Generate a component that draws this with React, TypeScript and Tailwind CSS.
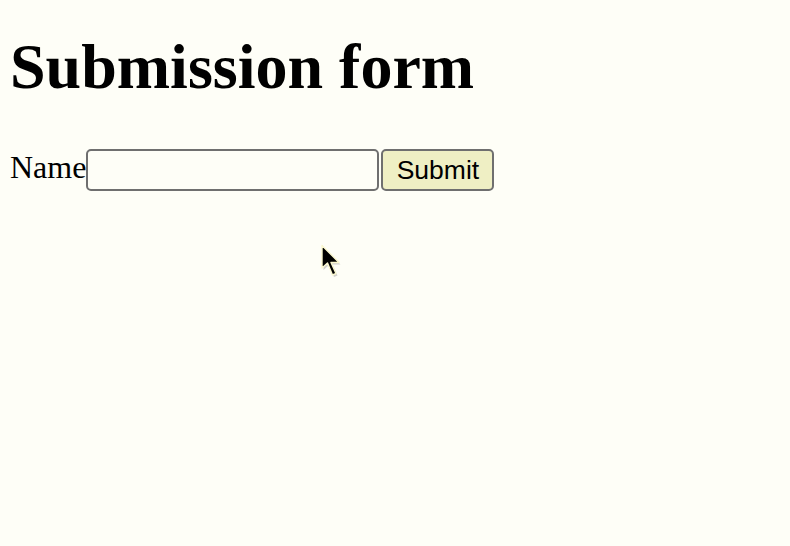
function Cursor() {
  return (
    <svg
      className="pointer-events-none absolute left-[318px] top-[242px]"
      width="28"
      height="40"
      viewBox="0 0 28 40"
    >
      <path
        d="M5.5 6 L5.5 28 L11 23 L16 35 L19.5 33.5 L14.5 22.5 L22.5 22.5 Z"
        fill="#9a9a9a"
        opacity="0.45"
      />
      <path
        d="M4 3.5 L4 26 L9.5 21 L14.5 33 L18 31.5 L13 20.5 L21 20.5 Z"
        fill="#000"
        stroke="#fbf8d0"
        strokeWidth="1.4"
        strokeLinejoin="round"
      />
    </svg>
  );
}

export default function App() {
  return (
    <div className="relative min-h-screen w-full bg-[#fefef7] font-['Liberation_Serif',serif] text-black">
      <div className="pl-[10px] pt-[35px]">
        <h1 className="text-[64px] font-bold leading-[64px]">Submission form</h1>
        <form
          className="mt-[50px] flex items-center"
          onSubmit={(e) => e.preventDefault()}
        >
          <label htmlFor="name" className="pb-[6px] text-[32px] leading-[32px]">
            Name
          </label>
          <input
            id="name"
            type="text"
            className="h-[42px] w-[293px] rounded-[5px] border-2 border-[#6f6f6f] bg-transparent px-1 outline-none"
          />
          <button
            type="submit"
            className="ml-[2px] h-[42px] w-[113px] rounded-[5px] border-2 border-[#6f6f6f] bg-[#efefc4] font-['Liberation_Sans',Arial,sans-serif] text-[26.5px] leading-none"
          >
            Submit
          </button>
        </form>
      </div>
      <Cursor />
    </div>
  );
}
